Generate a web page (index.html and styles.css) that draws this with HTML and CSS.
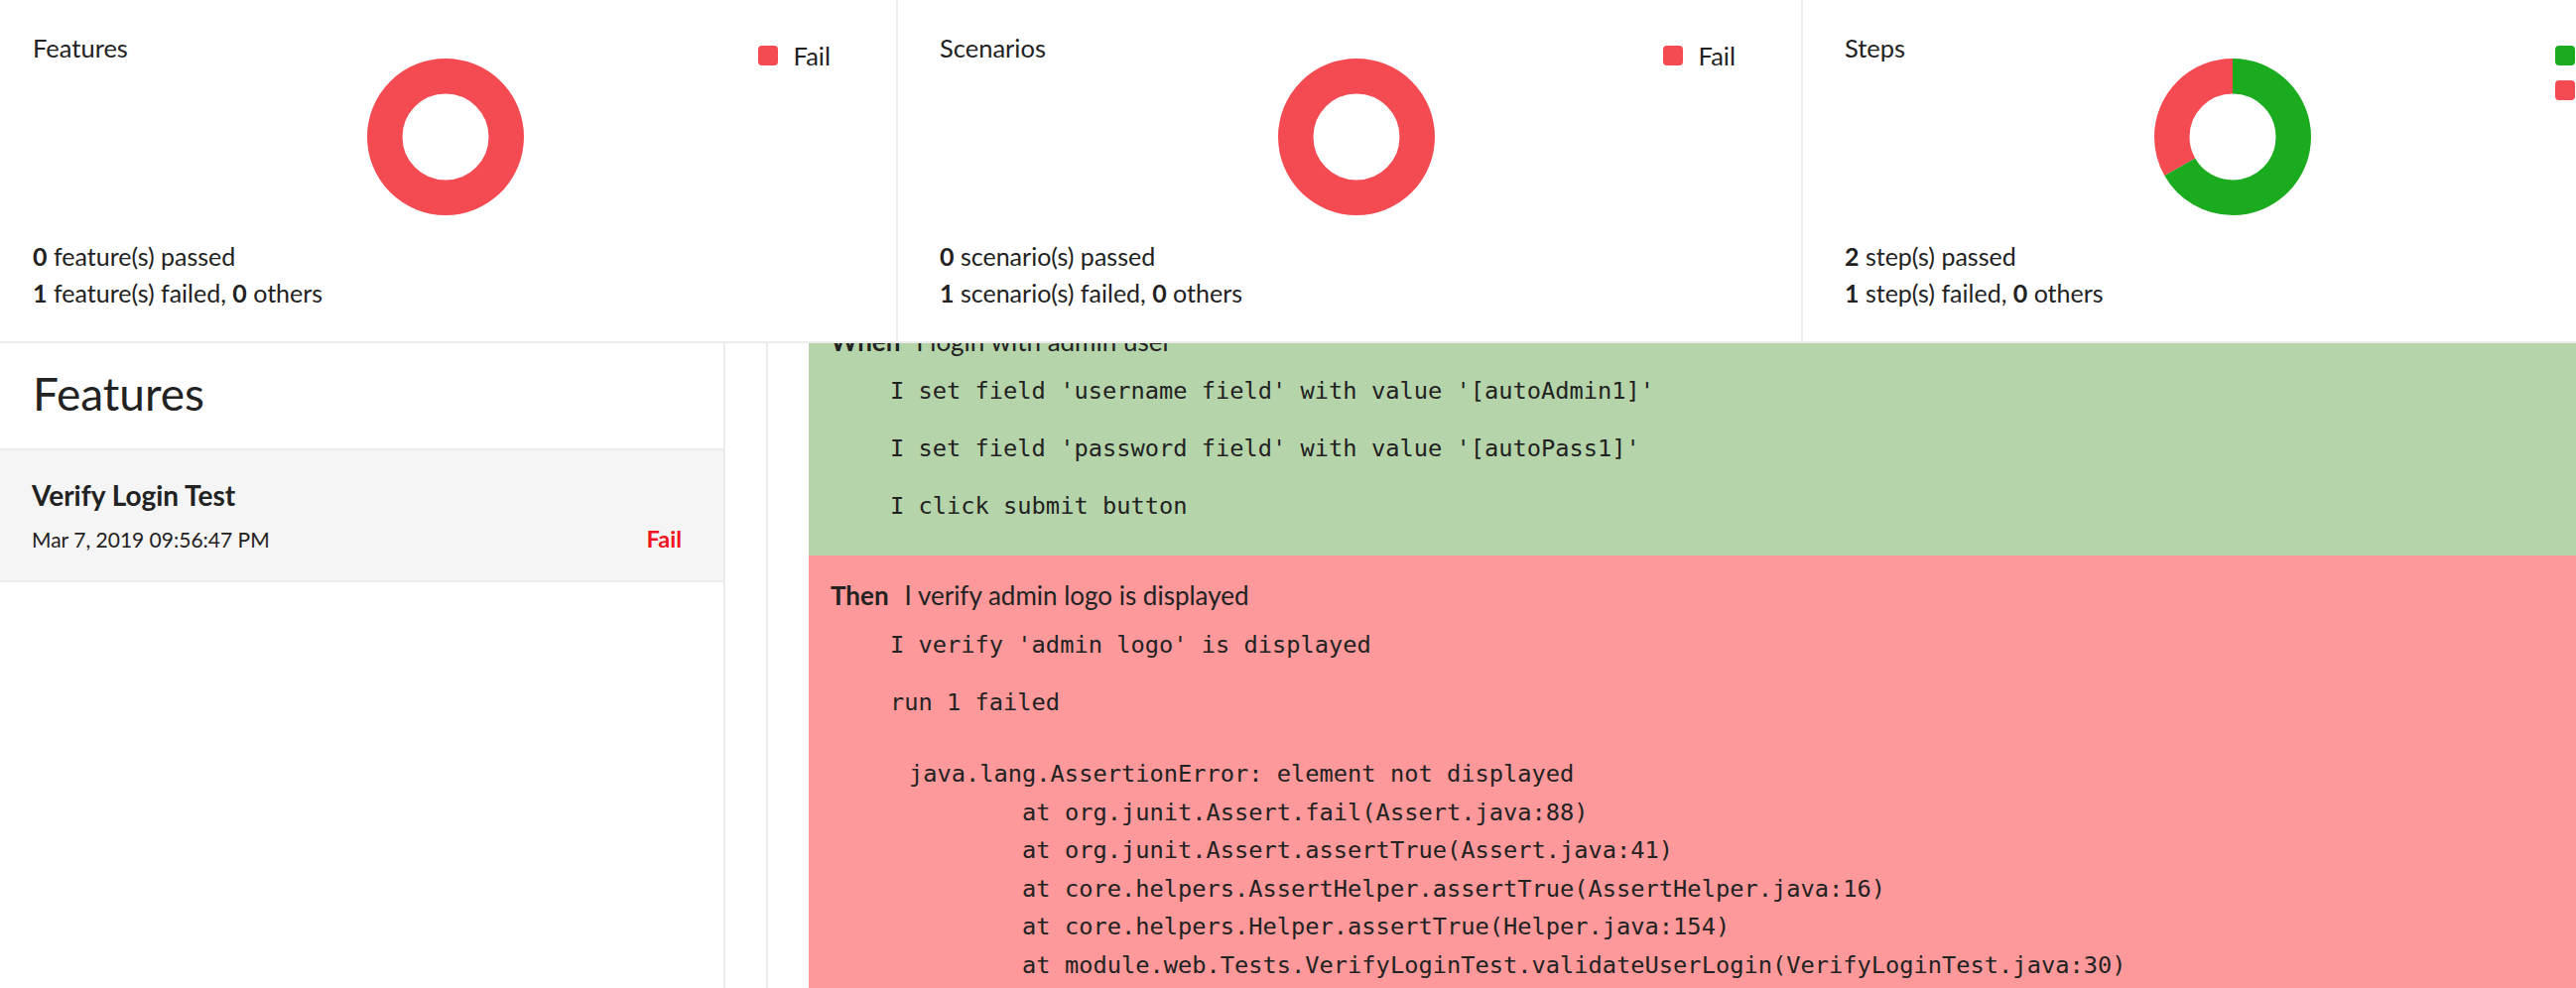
FILE: index.html
```html
<!DOCTYPE html>
<html lang="en">
<head>
<meta charset="utf-8">
<title>Test Report</title>
<link rel="stylesheet" href="styles.css">
</head>
<body>
<header class="summary">
  <section class="card card--features">
    <div class="card-top">
      <h2 class="card-title">Features</h2>
      <svg class="donut" viewBox="0 0 158 158" width="158" height="158">
        <circle cx="79" cy="79" r="61.25" fill="none" stroke="#f44a52" stroke-width="35.5"/>
      </svg>
      <ul class="legend">
        <li class="legend-item"><span class="swatch swatch--fail"></span>Fail</li>
      </ul>
    </div>
    <div class="card-stats">
      <p><b>0</b> feature(s) passed</p>
      <p><b>1</b> feature(s) failed, <b>0</b> others</p>
    </div>
  </section>
  <section class="card card--scenarios">
    <div class="card-top">
      <h2 class="card-title">Scenarios</h2>
      <svg class="donut" viewBox="0 0 158 158" width="158" height="158">
        <circle cx="79" cy="79" r="61.25" fill="none" stroke="#f44a52" stroke-width="35.5"/>
      </svg>
      <ul class="legend">
        <li class="legend-item"><span class="swatch swatch--fail"></span>Fail</li>
      </ul>
    </div>
    <div class="card-stats">
      <p><b>0</b> scenario(s) passed</p>
      <p><b>1</b> scenario(s) failed, <b>0</b> others</p>
    </div>
  </section>
  <section class="card card--steps">
    <div class="card-top">
      <h2 class="card-title">Steps</h2>
      <svg class="donut" viewBox="0 0 158 158" width="158" height="158">
        <g transform="rotate(-90 79 79)">
          <circle cx="79" cy="79" r="61.25" fill="none" stroke="#1bab1f" stroke-width="35.5" stroke-dasharray="256.57 400"/>
          <circle cx="79" cy="79" r="61.25" fill="none" stroke="#f44a52" stroke-width="35.5" stroke-dasharray="128.28 400" stroke-dashoffset="-256.57"/>
        </g>
      </svg>
      <ul class="legend">
        <li class="legend-item"><span class="swatch swatch--pass"></span>Pass</li>
        <li class="legend-item"><span class="swatch swatch--fail"></span>Fail</li>
      </ul>
    </div>
    <div class="card-stats">
      <p><b>2</b> step(s) passed</p>
      <p><b>1</b> step(s) failed, <b>0</b> others</p>
    </div>
  </section>
</header>

<main class="layout">
  <aside class="feature-list">
    <h1 class="feature-list-title">Features</h1>
    <div class="feature-item">
      <div class="feature-name">Verify Login Test</div>
      <div class="feature-meta">
        <span class="feature-date">Mar 7, 2019 09:56:47 PM</span>
        <span class="feature-status">Fail</span>
      </div>
    </div>
  </aside>
  <div class="rail"></div>
  <section class="detail">
    <div class="step step--pass">
      <div class="step-title"><b class="keyword">When</b>I login with admin user</div>
      <div class="step-line">I set field 'username field' with value '[autoAdmin1]'</div>
      <div class="step-line">I set field 'password field' with value '[autoPass1]'</div>
      <div class="step-line">I click submit button</div>
    </div>
    <div class="step step--fail">
      <div class="step-title"><b class="keyword">Then</b>I verify admin logo is displayed</div>
      <div class="step-line">I verify 'admin logo' is displayed</div>
      <div class="step-line">run 1 failed</div>
<pre class="stack">java.lang.AssertionError: element not displayed
	at org.junit.Assert.fail(Assert.java:88)
	at org.junit.Assert.assertTrue(Assert.java:41)
	at core.helpers.AssertHelper.assertTrue(AssertHelper.java:16)
	at core.helpers.Helper.assertTrue(Helper.java:154)
	at module.web.Tests.VerifyLoginTest.validateUserLogin(VerifyLoginTest.java:30)</pre>
    </div>
  </section>
</main>
</body>
</html>
```

FILE: styles.css
```css
* { box-sizing: border-box; }

html, body {
  margin: 0;
  padding: 0;
  overflow: hidden;
  background: #fff;
}

body {
  font-family: Lato, "Open Sans", sans-serif;
  color: #222;
  width: 2596px;
  height: 996px;
}

/* ---------- summary header ---------- */
.summary {
  position: relative;
  z-index: 2;
  display: flex;
  width: max-content;
  margin-left: -9px;
  background: #fff;
  border-bottom: 2px solid #ececec;
}

.card {
  flex: 0 0 912px;
  display: grid;
  grid-template-rows: auto auto;
  padding: 33px 66px 30px 42px;
  border-right: 2px solid #ececec;
}

.card--features { flex-basis: 914px; }

.card-top {
  display: grid;
}

.card-top > * {
  grid-area: 1 / 1;
}

.card-title {
  margin: 0;
  justify-self: start;
  align-self: start;
  font-size: 25.5px;
  line-height: 30px;
  font-weight: 400;
}

.donut {
  display: block;
  justify-self: start;
  align-self: start;
  margin-top: 26px;
  margin-left: 337px;
}

.card--scenarios .donut { margin-left: 341px; }
.card--steps .donut { margin-left: 312px; }

.legend {
  list-style: none;
  margin: 5px 0 0;
  padding: 0;
  justify-self: end;
  align-self: start;
  font-size: 25.5px;
}

.legend-item {
  display: flex;
  align-items: center;
  height: 35px;
}

.swatch {
  width: 20px;
  height: 20px;
  border-radius: 4px;
  margin-right: 16px;
}

.swatch--fail { background: #f44a52; }
.swatch--pass { background: #1bab1f; }

.card-stats {
  margin-top: 23px;
  font-size: 25px;
  line-height: 37px;
}

.card-stats p { margin: 0; }
.card-stats b { font-weight: 700; }

/* ---------- main layout ---------- */
.layout {
  display: grid;
  grid-template-columns: 731px 43px 1fr;
  margin-top: -42px;
  min-height: 720px;
}

.feature-list {
  border-right: 2px solid #ececec;
  padding-top: 65px;
}

.feature-list-title {
  margin: 0 0 28px;
  padding-left: 33px;
  font-size: 46px;
  line-height: 55px;
  font-weight: 400;
}

.feature-item {
  background: #f5f5f5;
  border-top: 2px solid #ececec;
  border-bottom: 2px solid #ececec;
  padding: 27px 42px 25px 32px;
}

.feature-name {
  font-size: 28px;
  line-height: 36px;
  font-weight: 700;
}

.feature-meta {
  display: flex;
  justify-content: space-between;
  align-items: baseline;
  margin-top: 10px;
  line-height: 32px;
}

.feature-date {
  font-size: 21px;
}

.feature-status {
  font-size: 23.5px;
  font-weight: 700;
  color: #f0141e;
}

.rail {
  border-right: 2px solid #ececec;
}

.detail {
  padding-left: 41px;
}

/* ---------- steps ---------- */
.step {
  padding: 22px 0 21px 22px;
}

.step--pass { background: #b6d4aa; }
.step--fail { background: #fd999a; }

.step-title {
  font-size: 26px;
  line-height: 36px;
  margin-bottom: 3px;
}

.keyword {
  font-weight: 700;
  margin-right: 16px;
}

.step-line,
.stack {
  font-family: "DejaVu Sans Mono", "Liberation Mono", monospace;
  font-size: 23.7px;
}

.step-line {
  padding: 12px 0 12px 60px;
  line-height: 34px;
}

.stack {
  margin: 24px 0 0 79px;
  line-height: 38.6px;
  white-space: pre;
  tab-size: 8;
}
```
